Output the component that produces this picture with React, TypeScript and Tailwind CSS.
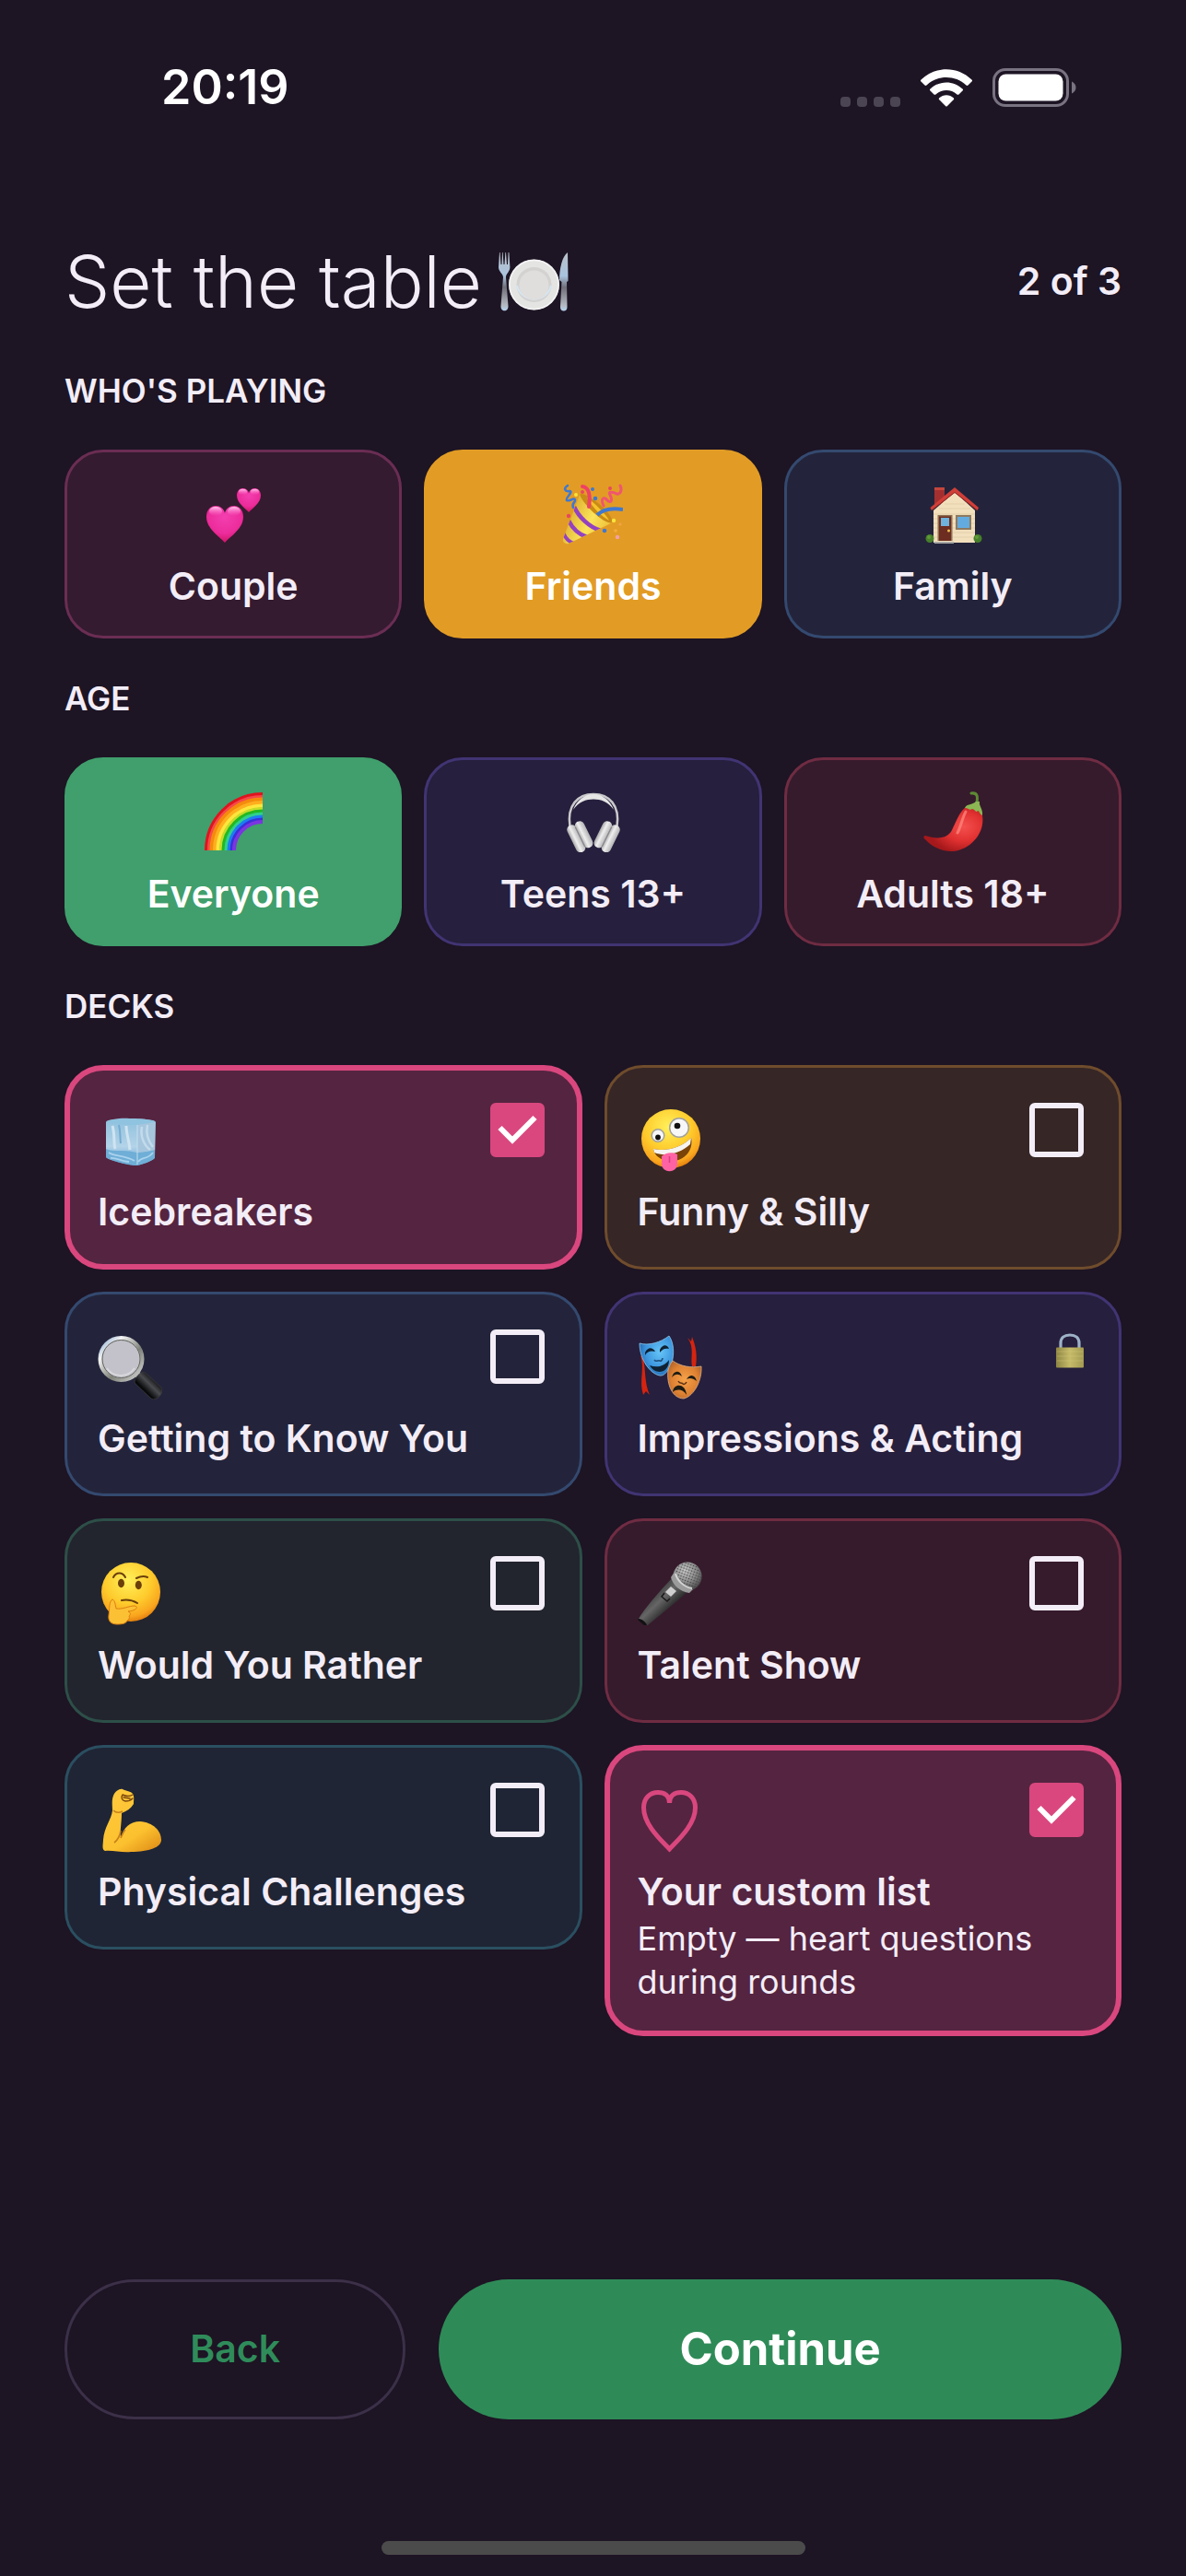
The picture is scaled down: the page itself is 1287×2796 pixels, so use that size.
import { useState, type ComponentType } from "react";
import clsx from "clsx";

interface IconProps {
    className?: string;
}

type Icon = ComponentType<IconProps>;

const HEART = "M20 40 C14 33 0 25 0 12 C0 4 5 0 10 0 C15 0 19 3 20 8 C21 3 25 0 30 0 C35 0 40 4 40 12 C40 25 26 33 20 40 Z";

const PlateIcon: Icon = ({ className }) => (
    <svg viewBox="0 0 80 68" className={className} aria-hidden="true">
        <defs>
            <linearGradient id="cutlery" x1="0" y1="0" x2="0" y2="1">
                <stop offset="0" stopColor="#b9c0c8" />
                <stop offset="0.4" stopColor="#a9c3de" />
                <stop offset="0.6" stopColor="#6f6f78" />
                <stop offset="0.9" stopColor="#b4b8c0" />
                <stop offset="1" stopColor="#b5d3ef" />
            </linearGradient>
        </defs>
        <path
            d="M2 2 L2.600 2 L3.500 15 L4.500 15 L5 2 L5.600 2 L6.500 15 L7.500 15 L8.400 2 L9 2 L10 15 L11 15 L11.600 2 L12.400 2 L13.400 18 C13.400 23 9 25 9 29 L11.500 60 C12 67 3 67 3.500 60 L6 29 C6 25 1 23 1 18 Z"
            fill="url(#cutlery)"
        />
        <path d="M76 2 C70 6 67 20 67 32 L69.500 34 L68 61 C67.500 67 76 67 75.500 61 L75 34 L76.500 33 Z" fill="url(#cutlery)" />
        <circle cx="39.500" cy="37" r="27.500" fill="#e4e4e3" />
        <circle cx="39.500" cy="37" r="26.500" fill="none" stroke="#f4f4f4" strokeWidth="1.500" />
        <circle cx="39.500" cy="37" r="19" fill="#d3d2d1" />
        <path d="M21 38 A19 19 0 0 0 58 38" fill="none" stroke="#d5e6f3" strokeWidth="2" />
        <circle cx="39.500" cy="37.500" r="16" fill="#dfdedd" />
    </svg>
);

const HeartsIcon: Icon = ({ className }) => (
    <svg viewBox="0 0 66 66" className={className} aria-hidden="true">
        <defs>
            <radialGradient id="hearts" cx="0.5" cy="0.3" r="0.75">
                <stop offset="0" stopColor="#f43fb0" />
                <stop offset="0.6" stopColor="#ec2c9b" />
                <stop offset="1" stopColor="#c90f5c" />
            </radialGradient>
            <linearGradient id="heartGloss" x1="0" y1="0" x2="0" y2="1">
                <stop offset="0" stopColor="#ffc4ec" />
                <stop offset="1" stopColor="#ff6fcb" stopOpacity="0" />
            </linearGradient>
        </defs>
        <g transform="translate(4 24)">
            <path d={HEART} fill="url(#hearts)" />
            <ellipse cx="10" cy="6" rx="7" ry="5" fill="url(#heartGloss)" />
            <ellipse cx="30" cy="6" rx="7" ry="5" fill="url(#heartGloss)" />
        </g>
        <g transform="translate(37 5) scale(0.65)">
            <path d={HEART} fill="url(#hearts)" />
            <ellipse cx="10" cy="6" rx="7" ry="5" fill="url(#heartGloss)" />
            <ellipse cx="30" cy="6" rx="7" ry="5" fill="url(#heartGloss)" />
        </g>
    </svg>
);

const PartyIcon: Icon = ({ className }) => (
    <svg viewBox="0 0 66 66" className={className} aria-hidden="true">
        <defs>
            <linearGradient id="cone" x1="0" y1="0.3" x2="1" y2="0.8">
                <stop offset="0" stopColor="#d39a1c" />
                <stop offset="0.5" stopColor="#fbe45c" />
                <stop offset="1" stopColor="#e3a71e" />
            </linearGradient>
            <clipPath id="coneClip">
                <path d="M19 12 L1 60 C0 64 5 67 9 64 L53 43 C44 42 24 24 19 12 Z" />
            </clipPath>
        </defs>
        <path d="M19 12 C25 7 56 33 54 41 C52 47 24 30 19 12 Z" fill="#c98a16" />
        <path d="M27 15 C34 20 47 32 51 40 C44 36 34 28 27 15 Z" fill="#f6c32c" />
        <g clipPath="url(#coneClip)">
            <rect width="66" height="66" fill="url(#cone)" />
            <path d="M13 25 C18 36 29 47 42 51" fill="none" stroke="#9442c0" strokeWidth="4.500" />
            <path d="M7 40 C11 48 18 55 27 58" fill="none" stroke="#9442c0" strokeWidth="4.500" />
            <path d="M1 53 C4 60 8 64 14 65" fill="none" stroke="#9442c0" strokeWidth="4" />
        </g>
        <path d="M6 2 C1 5 3 9 8 8 C13 8 3 16 5 18 C7 20 14 14 14 18 C14 21 10 21 12 26" fill="none" stroke="#3f78d0" strokeWidth="2.500" strokeLinecap="round" />
        <path d="M22 3 C29 4 31 12 29 25" fill="none" stroke="#ef4264" strokeWidth="4" strokeLinecap="round" />
        <path d="M38 34 C44 28 54 26 66 28" fill="none" stroke="#3f78d0" strokeWidth="4" />
        <path d="M45 24 C41 15 46 14 49 18 C53 22 55 18 52 12 C49 8 56 9 59 11 C64 12 65 6 63 2" fill="none" stroke="#f0566f" strokeWidth="3" strokeLinecap="round" />
        <g fill="#3f78d0">
            <circle cx="33" cy="6" r="2" />
            <circle cx="36" cy="16" r="2.300" />
            <circle cx="46" cy="51" r="2.300" />
        </g>
        <g fill="#e9475f">
            <circle cx="22" cy="9" r="2" />
            <circle cx="7" cy="35" r="2.200" />
            <circle cx="52" cy="5" r="2" />
            <circle cx="60" cy="58" r="2.200" fill="#f3a0a8" />
        </g>
        <circle cx="15" cy="12" r="2" fill="#f9e33c" />
        <circle cx="56" cy="40" r="2.200" fill="#f9e33c" />
        <circle cx="63" cy="44" r="1.600" fill="#f1a545" />
        <circle cx="58" cy="51" r="1.800" fill="#f2ae3a" />
    </svg>
);

const HouseIcon: Icon = ({ className }) => (
    <svg viewBox="0 0 66 66" className={className} aria-hidden="true">
        <rect x="13" y="4" width="11" height="18" fill="#a3302e" />
        <rect x="13" y="4" width="11" height="3" fill="#c4453c" />
        <path d="M35 9 L57 29 V64 H12 V29 Z" fill="#f2e0bd" />
        <path d="M12 33 H57 M12 38 H57 M12 43 H57 M12 48 H57 M12 53 H57 M12 58 H57 M18 27 H52 M24 22 H46" stroke="#dfcba4" strokeWidth="0.800" />
        <path d="M35 4 L61 26 L59.500 29 L35 9.500 L10 29 L8.500 26 Z" fill="#d03f38" />
        <path d="M35 9.500 L59.500 29 M35 9.500 L10 29" stroke="#8d2322" strokeWidth="1" />
        <rect x="16.500" y="34" width="16" height="28" fill="#8e7052" />
        <rect x="18" y="35.500" width="13" height="26.500" fill="#6d2d20" />
        <rect x="20" y="37" width="9" height="9" fill="#6fb2dc" />
        <circle cx="28.500" cy="51" r="1.500" fill="#f0c050" />
        <rect x="36" y="34" width="17" height="16" fill="#8e7a60" />
        <rect x="38" y="36" width="13" height="12" fill="#63abdf" />
        <path d="M13 63 H34 V65 H13 Z" fill="#a7a6a4" />
        <circle cx="8" cy="59.500" r="4.500" fill="#477f2b" />
        <circle cx="60" cy="59.500" r="4.500" fill="#477f2b" />
        <circle cx="7" cy="58" r="2" fill="#5f9a38" />
        <circle cx="59" cy="58" r="2" fill="#5f9a38" />
    </svg>
);

const rainbowBands = [
    { radius: 61, color: "#e0141e" },
    { radius: 58, color: "#f5494a" },
    { radius: 55.5, color: "#f58a0c" },
    { radius: 52, color: "#ffae1e" },
    { radius: 48.5, color: "#ffe53c" },
    { radius: 45, color: "#c5dc2a" },
    { radius: 42.5, color: "#22b922" },
    { radius: 39.5, color: "#2fd08c" },
    { radius: 36.5, color: "#1e7cf2" },
    { radius: 33.5, color: "#3a2fd8" },
    { radius: 31, color: "#7b35e0" },
];

const RainbowIcon: Icon = ({ className }) => (
    <svg viewBox="0 0 66 66" className={className} aria-hidden="true">
        {rainbowBands.map(({ radius, color }) => (
            <path
                key={radius}
                d={`M${65 - radius} 64 A${radius} ${radius} 0 0 1 65 ${64 - radius}`}
                fill="none"
                stroke={color}
                strokeWidth="4"
            />
        ))}
    </svg>
);

const HeadphonesIcon: Icon = ({ className }) => (
    <svg viewBox="0 0 66 66" className={className} aria-hidden="true">
        <defs>
            <linearGradient id="cup" x1="0" y1="0" x2="1" y2="0">
                <stop offset="0" stopColor="#a5a5a7" />
                <stop offset="0.4" stopColor="#efefef" />
                <stop offset="1" stopColor="#b2b2b4" />
            </linearGradient>
        </defs>
        <path d="M8.500 38 C5 15 17 3 34 3 C51 3 63 15 59.500 38" fill="none" stroke="#c9c9cb" strokeWidth="2.500" />
        <path d="M12 20 C16 9 25 3 34 3 C43 3 52 9 56 20 C50 11 42 8.500 34 8.500 C26 8.500 18 11 12 20 Z" fill="#e6e6e6" />
        <g transform="rotate(-26 20 49)">
            <rect x="9.500" y="33" width="10.500" height="32" rx="5" fill="url(#cup)" />
            <rect x="19" y="33" width="10.500" height="31" rx="5" fill="url(#cup)" />
            <rect x="18.800" y="37" width="1.200" height="24" fill="#85858a" />
        </g>
        <g transform="rotate(26 48 49)">
            <rect x="38.500" y="33" width="10.500" height="31" rx="5" fill="url(#cup)" />
            <rect x="48" y="33" width="10.500" height="32" rx="5" fill="url(#cup)" />
            <rect x="48" y="37" width="1.200" height="24" fill="#85858a" />
        </g>
    </svg>
);

const ChiliIcon: Icon = ({ className }) => (
    <svg viewBox="0 0 66 66" className={className} aria-hidden="true">
        <defs>
            <radialGradient id="chili" cx="0.68" cy="0.45" r="0.6">
                <stop offset="0" stopColor="#f4504d" />
                <stop offset="0.55" stopColor="#e03030" />
                <stop offset="1" stopColor="#a5181b" />
            </radialGradient>
        </defs>
        <path d="M47 17 C40 22 36 34 32 42 C28 50 18 53 3 48 C1 48 1 51 3 52 C10 60 22 66 34 65 C54 62 68 44 65 26 C62 18 54 15 47 17 Z" fill="url(#chili)" />
        <path d="M47 22 C43 29 42 38 38 45" fill="none" stroke="#ff8c83" strokeWidth="3" strokeLinecap="round" opacity="0.700" />
        <path d="M53 2 C60 1 60 6 59 12" fill="none" stroke="#5d8a35" strokeWidth="3" strokeLinecap="round" />
        <path d="M46 18 C48 13 54 15 58 11 L62 11 C61 16 66 19 65 26 C62 25 62 21 60 21 C58 24 57 19 54 19 C51 21 50 18 46 18 Z" fill="#8cb554" />
    </svg>
);

const IceIcon: Icon = ({ className }) => (
    <svg viewBox="0 0 70 70" className={className} aria-hidden="true">
        <defs>
            <linearGradient id="iceFace" x1="0" y1="0" x2="0" y2="1">
                <stop offset="0" stopColor="#8fc0dd" />
                <stop offset="0.6" stopColor="#b3d3e8" />
                <stop offset="1" stopColor="#5b9fd0" />
            </linearGradient>
        </defs>
        <path d="M9 15 C9 12 28 10 34 11 C45 11 63 12 63 15 L62 53 C62 56 46 62 42 62 C36 62 10 56 9 53 Z" fill="url(#iceFace)" />
        <path d="M10 14 C20 11 50 10 62 14 C58 17 46 18 40 18 C30 18 14 17 10 14 Z" fill="#8fc3df" />
        <path d="M43 18 L62 15 L62 46 L43 48 Z" fill="#a6c6de" />
        <path d="M48 20 C46 30 50 40 57 45 M54 18 C52 28 55 36 60 42" fill="none" stroke="#c3dbeb" strokeWidth="2.500" />
        <path d="M16 19 C19 29 17 38 19 44 M31 19 C31 28 34 34 35 45" fill="none" stroke="#cfe4f1" strokeWidth="3" />
        <path d="M23 18 C25 26 24 31 25 38" fill="none" stroke="#74abd1" strokeWidth="2" />
        <path d="M9 44 C18 48 26 44 42 48 C50 48 58 46 62 45 L62 54 C58 58 48 61 42 62 C34 62 14 57 9 53 Z" fill="#6faed6" />
        <path d="M12 48 C20 53 28 50 40 57 M44 58 C48 52 54 56 60 48 M14 54 C20 53 26 58 34 58" fill="none" stroke="#a9d2ee" strokeWidth="1.800" />
        <path d="M43 18 V61" stroke="#c3dff0" strokeWidth="1" />
    </svg>
);

const FaceGradient = ({ id }: { id: string }) => (
    <defs>
        <radialGradient id={id} cx="0.45" cy="0.3" r="0.72">
            <stop offset="0" stopColor="#fff05a" />
            <stop offset="0.55" stopColor="#fecb2c" />
            <stop offset="0.85" stopColor="#f9a51e" />
            <stop offset="1" stopColor="#e07a0c" />
        </radialGradient>
    </defs>
);

const ZanyIcon: Icon = ({ className }) => (
    <svg viewBox="0 0 70 70" className={className} aria-hidden="true">
        <FaceGradient id="zanyFace" />
        <circle cx="36" cy="33" r="32" fill="url(#zanyFace)" />
        <circle cx="22" cy="29.500" r="6.800" fill="#f7f7f7" stroke="#a0a0a0" strokeWidth="1.500" />
        <circle cx="45" cy="21" r="10.300" fill="#f7f7f7" stroke="#a0a0a0" strokeWidth="1.500" />
        <circle cx="22" cy="31.500" r="2.900" fill="#111" />
        <circle cx="43" cy="19" r="3.300" fill="#111" />
        <path d="M17 44 C30 47 47 43 58 32 C61 46 50 57 38 57 C27 58 18 52 17 44 Z" fill="#7a4308" />
        <path d="M17 44 C30 47 47 43 58 32 L57 39 C46 49 30 53 18 48 Z" fill="#f6f4f0" />
        <path d="M26 52 C30 48 38 47 43 50 L43 60 C43 71 26 71 26 60 Z" fill="#ff63a4" />
        <path d="M34.500 52 V59" stroke="#d93f80" strokeWidth="1.500" />
    </svg>
);

const MagnifierIcon: Icon = ({ className }) => (
    <svg viewBox="0 0 70 70" className={className} aria-hidden="true">
        <defs>
            <linearGradient id="ring" x1="0" y1="0" x2="1" y2="1">
                <stop offset="0" stopColor="#7e9fce" />
                <stop offset="0.25" stopColor="#f3f3f3" />
                <stop offset="0.6" stopColor="#7e8178" />
                <stop offset="1" stopColor="#dcdcdc" />
            </linearGradient>
            <linearGradient id="handle" x1="1" y1="0" x2="0" y2="1">
                <stop offset="0.25" stopColor="#0c0c0d" />
                <stop offset="0.45" stopColor="#4a4b4f" />
                <stop offset="0.65" stopColor="#08090a" />
            </linearGradient>
        </defs>
        <path d="M44 39 L51 45 L45 51 L40 44 Z" fill="#c7c7c7" />
        <path d="M47 41 C50 39 52 41 54 43 L69 57 C73 62 64 73 58 69 L41 53 C38 50 43 43 47 41 Z" fill="url(#handle)" stroke="#3a3a3e" strokeWidth="0.800" />
        <circle cx="25.500" cy="26" r="23" fill="#c3c2ca" stroke="url(#ring)" strokeWidth="4" />
        <circle cx="25.500" cy="26" r="20.500" fill="none" stroke="#5f625b" strokeWidth="1" />
        <path d="M10 36 C15 45 32 48 40 36" fill="none" stroke="#d7d7dc" strokeWidth="2" />
    </svg>
);

const MasksIcon: Icon = ({ className }) => (
    <svg viewBox="0 0 70 70" className={className} aria-hidden="true">
        <defs>
            <radialGradient id="comedy" cx="0.6" cy="0.4" r="0.7">
                <stop offset="0" stopColor="#66c5f8" />
                <stop offset="0.6" stopColor="#3c95dd" />
                <stop offset="1" stopColor="#1c5ea6" />
            </radialGradient>
            <radialGradient id="tragedy" cx="0.5" cy="0.5" r="0.65">
                <stop offset="0" stopColor="#f5a24a" />
                <stop offset="0.6" stopColor="#dd8132" />
                <stop offset="1" stopColor="#a85c28" />
            </radialGradient>
        </defs>
        <path d="M3 22 C8 36 1 50 6 65 L9 61 L13 65 C7 52 9 38 6 26 Z" fill="#d42410" />
        <path d="M54 3 C62 14 57 24 59 34 L63 34 C65 22 63 12 59 2 L58 7 Z" fill="#d42410" />
        <path d="M2 9 C12 12 25 8 34 1 C39 8 40 20 37 30 C34 38 29 45 24 44 C13 42 2 26 2 9 Z" fill="url(#comedy)" stroke="#8cc9ee" strokeWidth="0.800" />
        <path d="M8 19 C11 13 16 13 19 18 C15 17 11 17 8 22 Z M24 16 C27 10 32 10 34 15 C30 14 27 15 24 19 Z" fill="#0f2233" />
        <path d="M13 33 C21 36 29 34 34 27 C34 42 19 44 13 33 Z" fill="#0f2233" />
        <path d="M18 27 C20 30 22 27 24 28 C25 29 27 27 27 25" fill="none" stroke="#1d4f7c" strokeWidth="1.500" />
        <path d="M38 28 C46 34 58 36 69 34 C70 48 62 66 50 69 C38 69 31 54 33 38 C34 34 36 30 38 28 Z" fill="url(#tragedy)" stroke="#d9b08a" strokeWidth="0.800" />
        <path d="M37 46 C39 38 46 38 48 45 C44 42 41 42 37 46 Z M53 48 C57 42 62 43 64 50 C60 47 57 46 53 48 Z" fill="#1d1c14" />
        <path d="M38 62 C39 52 52 52 53 65 C49 59 43 58 38 62 Z" fill="#1d1c14" />
        <path d="M44 50 C46 54 48 51 49 53 C50 54 52 53 53 51" fill="none" stroke="#5f3212" strokeWidth="1.500" />
    </svg>
);

const ThinkingIcon: Icon = ({ className }) => (
    <svg viewBox="0 0 70 70" className={className} aria-hidden="true">
        <FaceGradient id="thinkingFace" />
        <circle cx="36" cy="33" r="32" fill="url(#thinkingFace)" />
        <ellipse cx="25.500" cy="23.500" rx="3.500" ry="4.700" fill="#6b3f0a" />
        <ellipse cx="44.300" cy="25.500" rx="3.500" ry="4.700" fill="#6b3f0a" />
        <path d="M17 17 C20 11 27 11 30 17 M42 18 C46 16 50 15 54 17" fill="none" stroke="#6b3f0a" strokeWidth="2" strokeLinecap="round" />
        <path d="M26 42 C32 41 38 42 43 45" fill="none" stroke="#6b3f0a" strokeWidth="2" strokeLinecap="round" />
        <path
            d="M16 41 C19 42 19 47 20 51 C27 52 34 48 40 48 C45 49 42 53 33 54 C37 56 35 58 34 59 C35 61 34 63 32 64 C31 67 27 68 21 68 C14 68 11 64 12 58 C13 52 12 43 16 41 Z"
            fill="#fcc035"
            stroke="#dd7f10"
            strokeWidth="1"
        />
    </svg>
);

const MicIcon: Icon = ({ className }) => (
    <svg viewBox="0 0 70 70" className={className} aria-hidden="true">
        <defs>
            <linearGradient id="micBody" x1="0.3" y1="0.3" x2="0.7" y2="0.7">
                <stop offset="0" stopColor="#3c3c3c" />
                <stop offset="0.4" stopColor="#666" />
                <stop offset="1" stopColor="#1a1a1a" />
            </linearGradient>
            <radialGradient id="micHead" cx="0.4" cy="0.3" r="0.7">
                <stop offset="0" stopColor="#c9c9c9" />
                <stop offset="0.6" stopColor="#8a8a8a" />
                <stop offset="1" stopColor="#4e4e4e" />
            </radialGradient>
            <pattern id="mesh" width="3" height="3" patternUnits="userSpaceOnUse" patternTransform="rotate(20)">
                <circle cx="1.500" cy="1.500" r="0.800" fill="#3f3f3f" />
            </pattern>
        </defs>
        <path d="M37 18 L54 33 C42 44 24 58 11 69 L8 69 L1 62 C8 50 24 32 37 18 Z" fill="url(#micBody)" />
        <path d="M1 62 C5 62 9 66 10 69 L7 69 L0 63 Z" fill="#111" />
        <circle cx="54" cy="16" r="15.500" fill="url(#micHead)" />
        <circle cx="54" cy="16" r="15.500" fill="url(#mesh)" />
        <path d="M40 11 C41 19 50 29 60 30 L56 34 C46 33 38 25 36 17 Z" fill="#9b9b9b" />
        <path d="M41 13 C43 21 51 28 59 29" fill="none" stroke="#d5d5d5" strokeWidth="2" />
        <path d="M36 27 L42 32 L36 38 L30 33 Z" fill="#cfcfcf" />
        <path d="M29 34 L26 38 L32 43 L35 40" fill="none" stroke="#191919" strokeWidth="1.500" />
    </svg>
);

const BicepsIcon: Icon = ({ className }) => (
    <svg viewBox="0 0 70 70" className={className} aria-hidden="true">
        <defs>
            <linearGradient id="arm" x1="0.2" y1="0" x2="0.8" y2="1">
                <stop offset="0" stopColor="#ffc93c" />
                <stop offset="0.7" stopColor="#fcc12f" />
                <stop offset="1" stopColor="#e3941a" />
            </linearGradient>
        </defs>
        <path
            d="M17 8 C19 3 24 0 27 1 C31 3 36 3 38 6 C40 9 39 13 39 17 C36 22 31 25 26 27 C26 38 24 46 25 53 C28 43 35 36 46 36 C60 37 69 46 69 56 C69 64 56 69 36 69 C26 70 16 67 8 68 C4 67 6 60 6 56 C7 42 15 34 16 24 C16 18 15 13 17 8 Z"
            fill="url(#arm)"
        />
        <path d="M17 24 C19 26 23 27 27 25 M25 46 C24 52 22 56 18 59 M25 54 C27 50 28 47 30 45" fill="none" stroke="#c7801a" strokeWidth="1.600" />
        <path d="M27 7 C31 9 35 9 38 7 M27 7 C25 10 26 13 30 14 C33 14 36 13 38 11 M28 10 L35 11" fill="none" stroke="#7d480d" strokeWidth="1.400" strokeLinecap="round" />
    </svg>
);

const OutlineHeartIcon: Icon = ({ className }) => (
    <svg viewBox="0 0 70 70" className={className} aria-hidden="true">
        <path
            d="M34.500 16 C34.500 8 29 4.500 22 4.500 C13 4.500 6.500 11 6.500 21 C6.500 39 24 55 34.500 66 C45 55 62.500 39 62.500 21 C62.500 11 56 4.500 47 4.500 C40 4.500 34.500 8 34.500 16 Z"
            fill="none"
            stroke="#d9477e"
            strokeWidth="5"
            strokeLinejoin="miter"
        />
    </svg>
);

const LockIcon: Icon = ({ className }) => (
    <svg viewBox="0 0 30 38" className={className} aria-hidden="true">
        <defs>
            <linearGradient id="lockBody" x1="0" y1="0" x2="1" y2="0">
                <stop offset="0" stopColor="#8d8443" />
                <stop offset="0.5" stopColor="#c6bb68" />
                <stop offset="1" stopColor="#a39a52" />
            </linearGradient>
        </defs>
        <path d="M5 17 V11 C5 5 9 2 15 2 C21 2 25 5 25 11 V17" fill="none" stroke="#9db2c6" strokeWidth="3.200" />
        <rect y="15.500" width="30" height="22" rx="1" fill="url(#lockBody)" />
        <path d="M1 20 H29 M1 25 H29 M1 30 H29" stroke="#d3ca7e" strokeWidth="0.400" />
    </svg>
);

const WifiIcon: Icon = ({ className }) => (
    <svg viewBox="0 0 56 41" className={className} aria-hidden="true">
        <path
            d="M0.500 11.500 C16 -3.600 40 -3.600 55.500 11.500 C56.200 12.200 56.200 13 55.500 13.600 L51.500 17.500 C50.800 18.100 50.100 18.100 49.500 17.500 C37.500 6.200 18.500 6.200 6.500 17.500 C5.900 18.100 5.200 18.100 4.500 17.500 L0.500 13.600 C-0.200 13 -0.200 12.200 0.500 11.500 Z"
            fill="white"
        />
        <path
            d="M10.500 21.500 C20.500 12 35.500 12 45.500 21.500 C46.200 22.200 46.200 22.900 45.500 23.500 L41.500 27.400 C40.900 28 40.200 28 39.500 27.400 C33 21.500 23 21.500 16.500 27.400 C15.800 28 15.100 28 14.500 27.400 L10.500 23.500 C9.800 22.900 9.800 22.200 10.500 21.500 Z"
            fill="white"
        />
        <path d="M20.300 31.200 C24.700 27.200 31.300 27.200 35.700 31.200 C36.400 31.900 36.400 32.600 35.700 33.300 L29 40 C28.300 40.700 27.700 40.700 27 40 L20.300 33.300 C19.600 32.600 19.600 31.900 20.300 31.200 Z" fill="white" />
    </svg>
);

const BatteryIcon: Icon = ({ className }) => (
    <svg viewBox="0 0 91 42" className={className} aria-hidden="true">
        <rect x="1.500" y="1.500" width="80" height="39" rx="12.500" fill="none" stroke="#797281" strokeWidth="3" />
        <rect x="6.500" y="6.500" width="70" height="29" rx="8" fill="white" />
        <path d="M86 14.500 C92 17 92 25 86 27.500 Z" fill="#797281" />
    </svg>
);

interface Tile {
    id: string;
    label: string;
    icon: Icon;
    tone: string;
    selectedTone: string;
}

const groups: Tile[] = [
    { id: "couple", label: "Couple", icon: HeartsIcon, tone: "bg-[#341b30] border-[#6a2d53]", selectedTone: "bg-[#d9477e] border-[#d9477e]" },
    { id: "friends", label: "Friends", icon: PartyIcon, tone: "bg-[#362626] border-[#6f4c2c]", selectedTone: "bg-[#e29c25] border-[#e29c25]" },
    { id: "family", label: "Family", icon: HouseIcon, tone: "bg-[#23243b] border-[#34496f]", selectedTone: "bg-[#4a7fc4] border-[#4a7fc4]" },
];

const ages: Tile[] = [
    { id: "everyone", label: "Everyone", icon: RainbowIcon, tone: "bg-[#22252e] border-[#2d4f48]", selectedTone: "bg-[#409f6c] border-[#409f6c]" },
    { id: "teens", label: "Teens 13+", icon: HeadphonesIcon, tone: "bg-[#261f3d] border-[#413473]", selectedTone: "bg-[#6d54c8] border-[#6d54c8]" },
    { id: "adults", label: "Adults 18+", icon: ChiliIcon, tone: "bg-[#361b2c] border-[#6f2c42]", selectedTone: "bg-[#d0455a] border-[#d0455a]" },
];

interface Deck {
    id: string;
    title: string;
    description?: string;
    icon: Icon;
    tone: string;
    locked?: boolean;
}

const decks: Deck[] = [
    { id: "icebreakers", title: "Icebreakers", icon: IceIcon, tone: "bg-[#341b30] border-[#6a2d53]" },
    { id: "funny", title: "Funny & Silly", icon: ZanyIcon, tone: "bg-[#362626] border-[#6f4c2c]" },
    { id: "know-you", title: "Getting to Know You", icon: MagnifierIcon, tone: "bg-[#23243b] border-[#34496f]" },
    { id: "acting", title: "Impressions & Acting", icon: MasksIcon, tone: "bg-[#261f3d] border-[#413473]", locked: true },
    { id: "rather", title: "Would You Rather", icon: ThinkingIcon, tone: "bg-[#22252e] border-[#2d4f48]" },
    { id: "talent", title: "Talent Show", icon: MicIcon, tone: "bg-[#361b2c] border-[#6f2c42]" },
    { id: "physical", title: "Physical Challenges", icon: BicepsIcon, tone: "bg-[#1f2535] border-[#2a4f60]" },
    {
        id: "custom",
        title: "Your custom list",
        description: "Empty — heart questions during rounds",
        icon: OutlineHeartIcon,
        tone: "bg-[#341b30] border-[#6a2d53]",
    },
];

function StatusBar() {
    return (
        <div className="flex h-[190px] items-center justify-between pr-[119px] pl-[175px]">
            <span className="text-[52px] leading-none font-semibold text-white">20:19</span>
            <div className="flex items-center gap-[22px]">
                <div className="flex gap-[7px] self-end">
                    {[0, 1, 2, 3].map((dot) => (
                        <span key={dot} className="size-[11px] rounded-[4px] bg-[#4b4453]" />
                    ))}
                </div>
                <WifiIcon className="h-[41px] w-[56px]" />
                <BatteryIcon className="h-[42px] w-[91px]" />
            </div>
        </div>
    );
}

interface TileGroupProps {
    name: string;
    title: string;
    tiles: Tile[];
    value: string;
    onChange: (id: string) => void;
}

function TileGroup({ name, title, tiles, value, onChange }: TileGroupProps) {
    return (
        <fieldset className="mb-[41px]">
            <legend className="mb-10 text-[35px] leading-[48px] font-semibold uppercase">{title}</legend>
            <div className="grid grid-cols-3 gap-6">
                {tiles.map(({ id, label, icon: TileIcon, tone, selectedTone }) => {
                    const selected = id === value;
                    return (
                        <label
                            key={id}
                            className={clsx(
                                "flex cursor-pointer flex-col items-center rounded-[42px] border-[3px] pt-[34px] pb-[26px]",
                                selected ? selectedTone : tone,
                                selected && "text-white"
                            )}
                        >
                            <input
                                type="radio"
                                name={name}
                                value={id}
                                checked={selected}
                                onChange={() => onChange(id)}
                                className="sr-only"
                            />
                            <TileIcon className="size-[66px]" />
                            <span className="mt-[17px] text-[41px] leading-[56px] font-semibold">{label}</span>
                        </label>
                    );
                })}
            </div>
        </fieldset>
    );
}

interface DeckCardProps {
    deck: Deck;
    selected: boolean;
    onToggle: () => void;
}

function DeckCard({ deck, selected, onToggle }: DeckCardProps) {
    const { id, title, description, icon: DeckIcon, tone, locked } = deck;

    return (
        <label
            htmlFor={locked ? undefined : id}
            className={clsx(
                "flex items-start justify-between rounded-[42px]",
                selected
                    ? "border-[6px] border-[#d9477e] bg-[#552440] pt-[35px] pr-[35px] pb-[29px] pl-[30px]"
                    : "border-[3px] pt-[38px] pr-[38px] pb-8 pl-[33px]",
                !selected && tone
            )}
        >
            <div className="min-w-0 flex-1">
                <DeckIcon className="mt-[6px] size-[70px]" />
                <div className="mt-[14px] text-[41px] leading-[56px] font-semibold whitespace-nowrap">{title}</div>
                {description && <p className="text-[36px] leading-[47px]">{description}</p>}
            </div>
            {locked ? (
                <LockIcon className="mt-1 h-[38px] w-[30px]" />
            ) : (
                <span className="relative -ml-[59px] size-[59px]">
                    <input
                        id={id}
                        type="checkbox"
                        checked={selected}
                        onChange={onToggle}
                        className="block size-full appearance-none rounded-[6px] border-[6px] border-[#f3edf7] checked:border-[#d9477e] checked:bg-[#d9477e]"
                    />
                    {selected && (
                        <svg viewBox="0 0 59 59" className="pointer-events-none absolute inset-0" aria-hidden="true">
                            <path d="M10.500 27 L24 40.500 L48.500 16" fill="none" stroke="white" strokeWidth="6" />
                        </svg>
                    )}
                </span>
            )}
        </label>
    );
}

export default function App() {
    const [group, setGroup] = useState("friends");
    const [age, setAge] = useState("everyone");
    const [selectedDecks, setSelectedDecks] = useState(["icebreakers", "custom"]);

    const toggleDeck = (id: string) => {
        setSelectedDecks((current) =>
            current.includes(id) ? current.filter((deckId) => deckId !== id) : [...current, id]
        );
    };

    return (
        <div className="flex min-h-screen flex-col bg-[#1d1424] font-['Inter',sans-serif] text-[#f3edf7]">
            <StatusBar />

            <main className="px-[70px] pt-[68px]">
                <header className="mb-[46px] flex h-24 items-center justify-between">
                    <h1 className="flex items-center gap-[17px] text-[78px] leading-none font-light">
                        Set the table
                        <PlateIcon className="h-[68px] w-[80px]" />
                    </h1>
                    <span className="text-[41px] font-semibold">2 of 3</span>
                </header>

                <TileGroup name="group" title="Who's playing" tiles={groups} value={group} onChange={setGroup} />
                <TileGroup name="age" title="Age" tiles={ages} value={age} onChange={setAge} />

                <section>
                    <h2 className="mb-10 text-[35px] leading-[48px] font-semibold uppercase">Decks</h2>
                    <div className="grid grid-cols-2 items-start gap-6">
                        {decks.map((deck) => (
                            <DeckCard
                                key={deck.id}
                                deck={deck}
                                selected={selectedDecks.includes(deck.id)}
                                onToggle={() => toggleDeck(deck.id)}
                            />
                        ))}
                    </div>
                </section>
            </main>

            <footer className="mt-auto px-[70px] pb-[23px]">
                <div className="grid grid-cols-[1fr_2fr] gap-9">
                    <button type="button" className="h-[152px] rounded-full border-[3px] border-[#3b3048] text-[41px] font-semibold text-[#2f8c5a]">
                        Back
                    </button>
                    <button type="button" className="h-[152px] rounded-full bg-[#2e8b57] text-[49px] font-bold text-white">
                        Continue
                    </button>
                </div>
                <div className="mx-auto mt-[132px] h-[15px] w-[460px] rounded-full bg-[#4b4b4b]" />
            </footer>
        </div>
    );
}
